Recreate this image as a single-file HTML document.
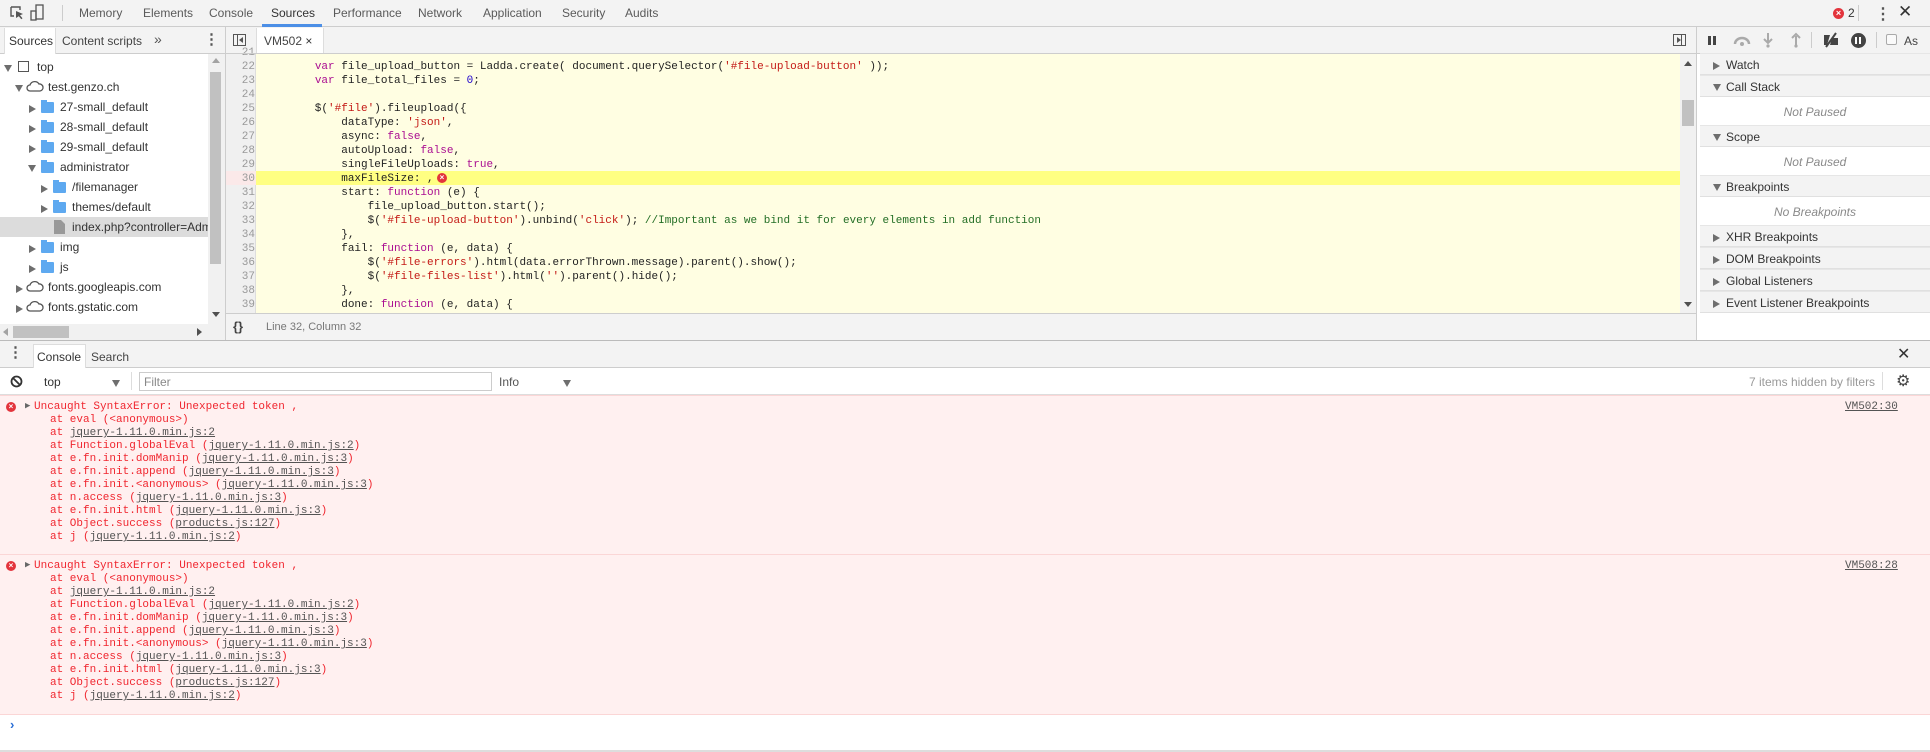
<!DOCTYPE html>
<html><head><meta charset="utf-8"><style>
*{box-sizing:border-box;margin:0;padding:0}
body{width:1930px;height:752px;overflow:hidden;background:#fff;font-family:"Liberation Sans",sans-serif;font-size:12px;color:#333;position:relative}
.a{position:absolute;white-space:nowrap}
.mono{font-family:"Liberation Mono",monospace;font-size:11px}
.kw{color:#aa0d91}.st{color:#c41a16}.cm{color:#236e25}.nu{color:#1c00cf}
.tri{display:inline-block;width:0;height:0;border-left:4px solid transparent;border-right:4px solid transparent;border-top:7px solid #6e6e6e;vertical-align:middle}
.tr{display:inline-block;width:0;height:0;border-top:4px solid transparent;border-bottom:4px solid transparent;border-left:7px solid #6e6e6e;vertical-align:middle}
.fold{position:absolute;width:13px;height:11px;background:#5ea9f0;border-radius:1px}
.fold:before{content:"";position:absolute;left:0;top:-2px;width:6px;height:3px;background:#5ea9f0}
.rh{position:absolute;left:1700px;width:230px;height:22px;background:#f3f3f3;border-bottom:1px solid #e0e0e0;border-top:1px solid #e6e6e6;padding:4px 0 0 13px;color:#333}
.rb{position:absolute;left:1700px;width:230px;height:28px;background:#fff;text-align:center;font-style:italic;color:#8a8a8a;padding-top:8px}
.err{position:absolute;left:0;width:1930px;background:#fff0f0;border-bottom:1px solid #fbd6d6;color:#f0262f}
.err .l{position:absolute;left:50px;line-height:13px}
.u{text-decoration:underline;color:#545454}
</style></head><body>

<!-- top tab bar -->
<div class="a" style="left:0;top:0;width:1930px;height:27px;background:#f3f3f3;border-bottom:1px solid #cdcdcd"></div>
<svg class="a" style="left:9px;top:5px" width="16" height="16" viewBox="0 0 16 16"><path d="M2 2h9v3M2 2v9h3" stroke="#555" fill="none" stroke-width="1.4"/><path d="M7 6l7 3-3 1.2 2.5 3-1.2 1-2.5-3L7 13z" fill="#555"/></svg>
<svg class="a" style="left:30px;top:4px" width="14" height="18" viewBox="0 0 14 18"><rect x="6" y="1" width="7" height="14" fill="none" stroke="#555" stroke-width="1.3"/><rect x="1" y="7" width="5" height="9" fill="none" stroke="#555" stroke-width="1.3"/></svg>
<div class="a" style="left:62px;top:5px;width:1px;height:16px;background:#ccc"></div>
<div class="a" style="left:79px;top:6px;color:#5a5a5a">Memory</div>
<div class="a" style="left:143px;top:6px;color:#5a5a5a">Elements</div>
<div class="a" style="left:209px;top:6px;color:#5a5a5a">Console</div>
<div class="a" style="left:271px;top:6px;color:#333">Sources</div>
<div class="a" style="left:262px;top:24px;width:60px;height:3px;background:#4c8fe6"></div>
<div class="a" style="left:333px;top:6px;color:#5a5a5a">Performance</div>
<div class="a" style="left:418px;top:6px;color:#5a5a5a">Network</div>
<div class="a" style="left:483px;top:6px;color:#5a5a5a">Application</div>
<div class="a" style="left:562px;top:6px;color:#5a5a5a">Security</div>
<div class="a" style="left:625px;top:6px;color:#5a5a5a">Audits</div>
<div class="a" style="left:1833px;top:8px;width:11px;height:11px;border-radius:50%;background:#e3343c;color:#fff;font-size:9px;line-height:11px;text-align:center;font-weight:bold">×</div>
<div class="a" style="left:1848px;top:6px;color:#333">2</div>
<div class="a" style="left:1858px;top:5px;width:1px;height:16px;background:#ccc"></div>
<div class="a" style="left:1875px;top:4px;font-size:16px;color:#555;font-weight:bold">⋮</div>
<div class="a" style="left:1898px;top:2px;font-size:17px;color:#333">✕</div>

<!-- second toolbar row -->
<div class="a" style="left:0;top:27px;width:1930px;height:27px;background:#f3f3f3;border-bottom:1px solid #cdcdcd"></div>
<div class="a" style="left:4px;top:28px;width:52px;height:26px;background:#fff;border-right:1px solid #ddd;border-left:1px solid #ddd"></div>
<div class="a" style="left:9px;top:34px">Sources</div>
<div class="a" style="left:62px;top:34px;color:#444">Content scripts</div>
<div class="a" style="left:154px;top:31px;font-size:14px;color:#555">»</div>
<div class="a" style="left:204px;top:30px;font-size:15px;color:#555;font-weight:bold">⋮</div>
<div class="a" style="left:225px;top:27px;width:1px;height:313px;background:#cdcdcd"></div>
<div class="a" style="left:233px;top:34px;width:13px;height:12px;border:1px solid #555"><div style="position:absolute;left:3px;top:0;width:1px;height:10px;background:#555"></div><div style="position:absolute;left:5px;top:2px;border-top:3px solid transparent;border-bottom:3px solid transparent;border-right:4px solid #555"></div></div>
<div class="a" style="left:256px;top:28px;width:68px;height:26px;background:#fff;border-left:1px solid #ddd;border-right:1px solid #ddd"></div>
<div class="a" style="left:264px;top:34px;color:#444">VM502 <span style="color:#333">×</span></div>
<div class="a" style="left:1673px;top:34px;width:13px;height:12px;border:1px solid #555"><div style="position:absolute;right:3px;top:0;width:1px;height:10px;background:#555"></div><div style="position:absolute;left:3px;top:2px;border-top:3px solid transparent;border-bottom:3px solid transparent;border-left:4px solid #555"></div></div>
<div class="a" style="left:1696px;top:27px;width:1px;height:313px;background:#cdcdcd"></div>
<!-- debugger toolbar -->
<div class="a" style="left:1708px;top:36px;width:3px;height:9px;background:#444"></div><div class="a" style="left:1713px;top:36px;width:3px;height:9px;background:#444"></div>
<svg class="a" style="left:1733px;top:34px" width="18" height="12"><path d="M2 10a7 6 0 0 1 14 0" stroke="#aaa" stroke-width="2.5" fill="none"/><circle cx="9" cy="10" r="2" fill="#aaa"/></svg>
<svg class="a" style="left:1763px;top:32px" width="10" height="16"><path d="M5 1v9M1 7l4 4 4-4" stroke="#aaa" stroke-width="2" fill="none"/><circle cx="5" cy="14" r="1.6" fill="#aaa"/></svg>
<svg class="a" style="left:1791px;top:32px" width="10" height="16"><path d="M5 4v9M1 6l4-4 4 4" stroke="#aaa" stroke-width="2" fill="none"/><circle cx="5" cy="14" r="1.6" fill="#aaa"/></svg>
<div class="a" style="left:1811px;top:32px;width:1px;height:16px;background:#ccc"></div>
<svg class="a" style="left:1822px;top:32px" width="18" height="16"><path d="M2 3h6l-3 10H2z M10 6h6v7H8z" fill="#444"/><path d="M14 1L4 15" stroke="#444" stroke-width="2"/></svg>
<div class="a" style="left:1851px;top:33px;width:15px;height:15px;border-radius:50%;background:#444"><div style="position:absolute;left:4px;top:4px;width:2px;height:7px;background:#fff"></div><div style="position:absolute;left:8px;top:4px;width:2px;height:7px;background:#fff"></div></div>
<div class="a" style="left:1876px;top:32px;width:1px;height:16px;background:#ccc"></div>
<div class="a" style="left:1886px;top:34px;width:11px;height:11px;border:1px solid #aaa;border-radius:2px;background:#fafafa"></div>
<div class="a" style="left:1904px;top:34px;color:#444">As</div>

<!-- left navigator tree -->
<div class="a" style="left:0;top:217px;width:208px;height:20px;background:#dcdcdc"></div>
<div class="a" style="left:4px;top:61px"><span class="tri"></span></div>
<div class="a" style="left:18px;top:61px;width:11px;height:11px;border:1.5px solid #555"></div>
<div class="a" style="left:37px;top:60px;color:#333">top</div>
<div class="a" style="left:15px;top:81px"><span class="tri"></span></div>
<svg class="a" style="left:26px;top:80px" width="18" height="12"><path d="M4 11a3 3 0 0 1 0-6 5 5 0 0 1 9-1 3.5 3.5 0 0 1 1 7z" fill="none" stroke="#555" stroke-width="1.3"/></svg>
<div class="a" style="left:48px;top:80px">test.genzo.ch</div>
<div class="a" style="left:29px;top:101px"><span class="tr"></span></div><div class="fold" style="left:41px;top:102px"></div><div class="a" style="left:60px;top:100px">27-small_default</div>
<div class="a" style="left:29px;top:121px"><span class="tr"></span></div><div class="fold" style="left:41px;top:122px"></div><div class="a" style="left:60px;top:120px">28-small_default</div>
<div class="a" style="left:29px;top:141px"><span class="tr"></span></div><div class="fold" style="left:41px;top:142px"></div><div class="a" style="left:60px;top:140px">29-small_default</div>
<div class="a" style="left:28px;top:161px"><span class="tri"></span></div><div class="fold" style="left:41px;top:162px"></div><div class="a" style="left:60px;top:160px">administrator</div>
<div class="a" style="left:41px;top:181px"><span class="tr"></span></div><div class="fold" style="left:53px;top:182px"></div><div class="a" style="left:72px;top:180px">/filemanager</div>
<div class="a" style="left:41px;top:201px"><span class="tr"></span></div><div class="fold" style="left:53px;top:202px"></div><div class="a" style="left:72px;top:200px">themes/default</div>
<svg class="a" style="left:54px;top:220px" width="11" height="14"><path d="M0 0h7l4 4v10H0z" fill="#999"/></svg>
<div class="a" style="left:72px;top:220px;width:136px;overflow:hidden">index.php?controller=AdminProducts</div>
<div class="a" style="left:29px;top:241px"><span class="tr"></span></div><div class="fold" style="left:41px;top:242px"></div><div class="a" style="left:60px;top:240px">img</div>
<div class="a" style="left:29px;top:261px"><span class="tr"></span></div><div class="fold" style="left:41px;top:262px"></div><div class="a" style="left:60px;top:260px">js</div>
<div class="a" style="left:16px;top:281px"><span class="tr"></span></div>
<svg class="a" style="left:26px;top:280px" width="18" height="12"><path d="M4 11a3 3 0 0 1 0-6 5 5 0 0 1 9-1 3.5 3.5 0 0 1 1 7z" fill="none" stroke="#555" stroke-width="1.3"/></svg>
<div class="a" style="left:48px;top:280px">fonts.googleapis.com</div>
<div class="a" style="left:16px;top:301px"><span class="tr"></span></div>
<svg class="a" style="left:26px;top:300px" width="18" height="12"><path d="M4 11a3 3 0 0 1 0-6 5 5 0 0 1 9-1 3.5 3.5 0 0 1 1 7z" fill="none" stroke="#555" stroke-width="1.3"/></svg>
<div class="a" style="left:48px;top:300px">fonts.gstatic.com</div>
<!-- left scrollbars -->
<div class="a" style="left:208px;top:54px;width:17px;height:272px;background:#f1f1f1"></div>
<div class="a" style="left:210px;top:72px;width:11px;height:192px;background:#c1c1c1"></div>
<div class="a" style="left:212px;top:58px;border-left:4px solid transparent;border-right:4px solid transparent;border-bottom:5px solid #a3a3a3"></div>
<div class="a" style="left:212px;top:312px;border-left:4px solid transparent;border-right:4px solid transparent;border-top:5px solid #505050"></div>
<div class="a" style="left:0;top:324px;width:225px;height:16px;background:#f1f1f1"></div>
<div class="a" style="left:13px;top:326px;width:56px;height:12px;background:#c1c1c1"></div>
<div class="a" style="left:3px;top:328px;border-top:4px solid transparent;border-bottom:4px solid transparent;border-right:5px solid #a3a3a3"></div>
<div class="a" style="left:197px;top:328px;border-top:4px solid transparent;border-bottom:4px solid transparent;border-left:5px solid #505050"></div>

<!-- code editor -->
<div class="a" style="left:226px;top:54px;width:30px;height:259px;background:#f0f0f0;border-right:1px solid #ddd"></div>
<div class="a" style="left:256px;top:54px;width:1424px;height:259px;background:#fffee2"></div>
<div class="a" style="left:256px;top:171px;width:1424px;height:14px;background:#ffff82"></div>
<div class="a" style="left:226px;top:171px;width:30px;height:14px;background:#fbe9e9"></div>
<div class="a mono" style="left:226px;top:46px;width:29px;text-align:right;line-height:14px;color:#999;white-space:normal">21<br>22<br>23<br>24<br>25<br>26<br>27<br>28<br>29<br>30<br>31<br>32<br>33<br>34<br>35<br>36<br>37<br>38<br>39</div>
<div class="a" style="left:226px;top:53px;width:1454px;height:1px;background:#cdcdcd"></div>
<pre class="a mono" style="left:262px;top:60px;line-height:14px;color:#222;white-space:pre;font-family:'Liberation Mono',monospace">
        <span class="kw">var</span> file_upload_button = Ladda.create( document.querySelector(<span class="st">'#file-upload-button'</span> ));
        <span class="kw">var</span> file_total_files = <span class="nu">0</span>;

        $(<span class="st">'#file'</span>).fileupload({
            dataType: <span class="st">'json'</span>,
            async: <span class="kw">false</span>,
            autoUpload: <span class="kw">false</span>,
            singleFileUploads: <span class="kw">true</span>,
            maxFileSize: ,
            start: <span class="kw">function</span> (e) {
                file_upload_button.start();
                $(<span class="st">'#file-upload-button'</span>).unbind(<span class="st">'click'</span>); <span class="cm">//Important as we bind it for every elements in add function</span>
            },
            fail: <span class="kw">function</span> (e, data) {
                $(<span class="st">'#file-errors'</span>).html(data.errorThrown.message).parent().show();
                $(<span class="st">'#file-files-list'</span>).html(<span class="st">''</span>).parent().hide();
            },
            done: <span class="kw">function</span> (e, data) {</pre>
<div class="a" style="left:437px;top:173px;width:10px;height:10px;border-radius:50%;background:#e3343c;color:#fff;font-size:8px;line-height:10px;text-align:center;font-weight:bold">×</div>
<!-- code scrollbar -->
<div class="a" style="left:1680px;top:54px;width:16px;height:259px;background:#f1f1f1"></div>
<div class="a" style="left:1682px;top:100px;width:12px;height:26px;background:#c1c1c1"></div>
<div class="a" style="left:1684px;top:61px;border-left:4px solid transparent;border-right:4px solid transparent;border-bottom:5px solid #505050"></div>
<div class="a" style="left:1684px;top:302px;border-left:4px solid transparent;border-right:4px solid transparent;border-top:5px solid #505050"></div>
<!-- status bar -->
<div class="a" style="left:226px;top:313px;width:1470px;height:27px;background:#f3f3f3;border-top:1px solid #cdcdcd"></div>
<div class="a" style="left:233px;top:319px;font-weight:bold;color:#444;font-size:13px">{}</div>
<div class="a" style="left:266px;top:321px;color:#777;font-size:11px">Line 32, Column 32</div>

<!-- right sidebar -->
<div class="rh" style="top:53px"><span class="tr" style="margin-right:6px"></span>Watch</div>
<div class="rh" style="top:75px"><span class="tri" style="margin-right:5px"></span>Call Stack</div>
<div class="rb" style="top:97px">Not Paused</div>
<div class="rh" style="top:125px"><span class="tri" style="margin-right:5px"></span>Scope</div>
<div class="rb" style="top:147px">Not Paused</div>
<div class="rh" style="top:175px"><span class="tri" style="margin-right:5px"></span>Breakpoints</div>
<div class="rb" style="top:197px">No Breakpoints</div>
<div class="rh" style="top:225px"><span class="tr" style="margin-right:6px"></span>XHR Breakpoints</div>
<div class="rh" style="top:247px"><span class="tr" style="margin-right:6px"></span>DOM Breakpoints</div>
<div class="rh" style="top:269px"><span class="tr" style="margin-right:6px"></span>Global Listeners</div>
<div class="rh" style="top:291px"><span class="tr" style="margin-right:6px"></span>Event Listener Breakpoints</div>

<!-- drawer -->
<div class="a" style="left:0;top:340px;width:1930px;height:28px;background:#f3f3f3;border-top:1px solid #bbb;border-bottom:1px solid #cdcdcd"></div>
<div class="a" style="left:8px;top:343px;font-size:15px;color:#555;font-weight:bold">⋮</div>
<div class="a" style="left:33px;top:344px;width:53px;height:24px;background:#fff;border:1px solid #ddd;border-bottom:none"></div>
<div class="a" style="left:37px;top:350px">Console</div>
<div class="a" style="left:91px;top:350px;color:#444">Search</div>
<div class="a" style="left:1897px;top:344px;font-size:16px;color:#333">✕</div>
<div class="a" style="left:0;top:368px;width:1930px;height:27px;background:#fff;border-bottom:1px solid #ddd"></div>
<svg class="a" style="left:10px;top:375px" width="13" height="13"><circle cx="6.5" cy="6.5" r="5" stroke="#333" stroke-width="1.8" fill="none"/><path d="M3 3l7 7" stroke="#333" stroke-width="1.8"/></svg>
<div class="a" style="left:44px;top:375px">top</div>
<div class="a" style="left:112px;top:376px"><span class="tri"></span></div>
<div class="a" style="left:131px;top:372px;width:1px;height:18px;background:#ddd"></div>
<div class="a" style="left:139px;top:372px;width:353px;height:19px;border:1px solid #ccc"></div>
<div class="a" style="left:144px;top:375px;color:#888">Filter</div>
<div class="a" style="left:499px;top:375px;color:#555">Info</div>
<div class="a" style="left:563px;top:376px"><span class="tri"></span></div>
<div class="a" style="left:1749px;top:375px;color:#999">7 items hidden by filters</div>
<div class="a" style="left:1882px;top:372px;width:1px;height:18px;background:#ddd"></div>
<div class="a" style="left:1896px;top:371px;font-size:16px;color:#444">⚙</div>

<!-- errors -->
<div class="err mono" style="top:395px;height:160px;border-top:1px solid #fbd6d6">
 <div class="a" style="left:6px;top:6px;width:10px;height:10px;border-radius:50%;background:#e3343c;color:#fff;font-size:8px;line-height:10px;text-align:center;font-family:'Liberation Sans';font-weight:bold">×</div>
 <div class="a" style="left:25px;top:5px;color:#666;font-size:9px">▶</div>
 <div class="a" style="left:34px;top:5px">Uncaught SyntaxError: Unexpected token ,</div>
 <div class="a u" style="left:1845px;top:5px">VM502:30</div>
 <div class="l" style="top:18px">at eval (&lt;anonymous&gt;)<br>at <span class="u">jquery-1.11.0.min.js:2</span><br>at Function.globalEval (<span class="u">jquery-1.11.0.min.js:2</span>)<br>at e.fn.init.domManip (<span class="u">jquery-1.11.0.min.js:3</span>)<br>at e.fn.init.append (<span class="u">jquery-1.11.0.min.js:3</span>)<br>at e.fn.init.&lt;anonymous&gt; (<span class="u">jquery-1.11.0.min.js:3</span>)<br>at n.access (<span class="u">jquery-1.11.0.min.js:3</span>)<br>at e.fn.init.html (<span class="u">jquery-1.11.0.min.js:3</span>)<br>at Object.success (<span class="u">products.js:127</span>)<br>at j (<span class="u">jquery-1.11.0.min.js:2</span>)</div>
</div>
<div class="err mono" style="top:555px;height:160px">
 <div class="a" style="left:6px;top:6px;width:10px;height:10px;border-radius:50%;background:#e3343c;color:#fff;font-size:8px;line-height:10px;text-align:center;font-family:'Liberation Sans';font-weight:bold">×</div>
 <div class="a" style="left:25px;top:5px;color:#666;font-size:9px">▶</div>
 <div class="a" style="left:34px;top:5px">Uncaught SyntaxError: Unexpected token ,</div>
 <div class="a u" style="left:1845px;top:5px">VM508:28</div>
 <div class="l" style="top:18px">at eval (&lt;anonymous&gt;)<br>at <span class="u">jquery-1.11.0.min.js:2</span><br>at Function.globalEval (<span class="u">jquery-1.11.0.min.js:2</span>)<br>at e.fn.init.domManip (<span class="u">jquery-1.11.0.min.js:3</span>)<br>at e.fn.init.append (<span class="u">jquery-1.11.0.min.js:3</span>)<br>at e.fn.init.&lt;anonymous&gt; (<span class="u">jquery-1.11.0.min.js:3</span>)<br>at n.access (<span class="u">jquery-1.11.0.min.js:3</span>)<br>at e.fn.init.html (<span class="u">jquery-1.11.0.min.js:3</span>)<br>at Object.success (<span class="u">products.js:127</span>)<br>at j (<span class="u">jquery-1.11.0.min.js:2</span>)</div>
</div>
<div class="a" style="left:10px;top:717px;color:#2b6fd6;font-weight:bold;font-size:13px">›</div>
<div class="a" style="left:0;top:750px;width:1930px;height:2px;background:#ddd"></div>
</body></html>
